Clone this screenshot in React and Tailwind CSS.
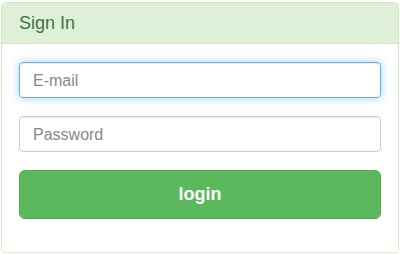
export default function App() {
    return (
        <div className="w-[400px] h-[255px] bg-white pt-[2px] px-[1px] font-['Liberation_Sans',Arial,sans-serif]">
            <div className="w-[398px] h-[251px] border border-[#d6e9c6] rounded-[4px] overflow-hidden bg-white">
                <div className="h-[41px] px-[17px] pt-[1px] flex items-center bg-[#dff0d8] border-b border-[#d6e9c6] text-[#3c763d] text-[18px]">
                    Sign In
                </div>
                <form className="px-[17px] pt-[18px] flex flex-col gap-[18px]" onSubmit={(e) => e.preventDefault()}>
                    <input
                        type="email"
                        placeholder="E-mail"
                        className="h-[36px] w-full px-[13px] pt-[1px] text-[16px] text-[#555] placeholder:text-[#888] border border-[#66afe9] rounded-[4px] outline-none shadow-[inset_0_1px_1px_rgba(0,0,0,0.075),0_0_8px_rgba(102,175,233,0.6)]"
                    />
                    <input
                        type="password"
                        placeholder="Password"
                        className="h-[36px] w-full px-[13px] pt-[1px] text-[16px] text-[#555] placeholder:text-[#888] border border-[#ccc] rounded-[4px] outline-none shadow-[inset_0_1px_1px_rgba(0,0,0,0.075)]"
                    />
                    <button
                        type="submit"
                        className="h-[49px] w-full bg-[#5cb85c] border border-[#4cae4c] rounded-[6px] text-white text-[18px] font-bold"
                    >
                        login
                    </button>
                </form>
            </div>
        </div>
    );
}
